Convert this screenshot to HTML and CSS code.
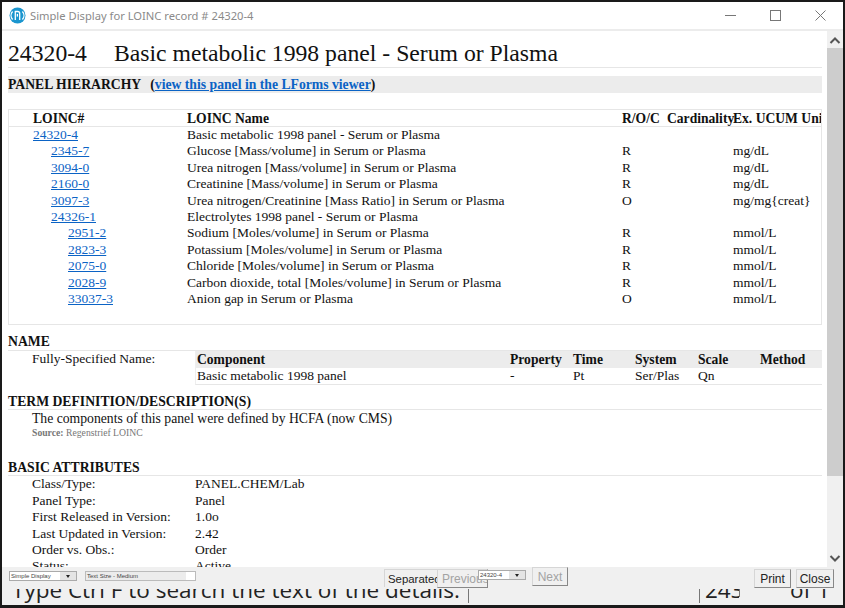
FILE: index.html
```html
<!DOCTYPE html>
<html lang="en">
<head>
    <meta charset="UTF-8">
    <title>Simple Display for LOINC record # 24320-4</title>
    <link rel="stylesheet" href="styles.css">
</head>
<body>
<div class="win">
    <div class="titlebar">
        <svg class="logo" width="17" height="17" viewBox="0 0 17 17">
            <circle cx="8.5" cy="8.5" r="8" fill="#1b96cf"/>
            <path d="M3.600 12.500a6 6 0 0 1 0-8M13.400 4.500a6 6 0 0 1 0 8" fill="none" stroke="#fff" stroke-width="1.300"/>
            <path d="M6.300 13V4.500h2.400a2 2 0 0 1 2 2v6.500" fill="none" stroke="#fff" stroke-width="1.300"/>
            <path d="M8.400 7v2.600" fill="none" stroke="#fff" stroke-width="1.300"/>
        </svg>
        <span class="title-text">Simple Display for LOINC record # 24320-4</span>
        <div class="win-btns">
            <svg width="11" height="11" viewBox="0 0 11 11"><path d="M0 5.500h11" stroke="#777" fill="none"/></svg>
            <svg width="11" height="11" viewBox="0 0 11 11"><rect x=".5" y=".5" width="10" height="10" stroke="#777" fill="none"/></svg>
            <svg width="11" height="11" viewBox="0 0 11 11"><path d="M.5.5l10 10M10.500.5l-10 10" stroke="#777" fill="none"/></svg>
        </div>
    </div>
    <div class="body-row">
        <div class="doc">
            <h1><span class="code">24320-4</span>Basic metabolic 1998 panel - Serum or Plasma</h1>

            <h2 class="bar">PANEL HIERARCHY<span class="paren">(<a href="#">view this panel in the LForms viewer</a>)</span></h2>

            <div class="hier">
                <div class="hrow hhead"><b class="c1">LOINC#</b><b class="c2">LOINC Name</b><b class="c3">R/O/C</b><b class="c4">Cardinality</b><b class="c5">Ex. UCUM Units</b></div>
                <div class="hrow"><span class="c1"><a href="#">24320-4</a></span><span class="c2">Basic metabolic 1998 panel - Serum or Plasma</span></div>
                <div class="hrow"><span class="c1 l1"><a href="#">2345-7</a></span><span class="c2">Glucose [Mass/volume] in Serum or Plasma</span><span class="c3">R</span><span class="c4"></span><span class="c5">mg/dL</span></div>
                <div class="hrow"><span class="c1 l1"><a href="#">3094-0</a></span><span class="c2">Urea nitrogen [Mass/volume] in Serum or Plasma</span><span class="c3">R</span><span class="c4"></span><span class="c5">mg/dL</span></div>
                <div class="hrow"><span class="c1 l1"><a href="#">2160-0</a></span><span class="c2">Creatinine [Mass/volume] in Serum or Plasma</span><span class="c3">R</span><span class="c4"></span><span class="c5">mg/dL</span></div>
                <div class="hrow"><span class="c1 l1"><a href="#">3097-3</a></span><span class="c2">Urea nitrogen/Creatinine [Mass Ratio] in Serum or Plasma</span><span class="c3">O</span><span class="c4"></span><span class="c5">mg/mg{creat}</span></div>
                <div class="hrow"><span class="c1 l1"><a href="#">24326-1</a></span><span class="c2">Electrolytes 1998 panel - Serum or Plasma</span></div>
                <div class="hrow"><span class="c1 l2"><a href="#">2951-2</a></span><span class="c2">Sodium [Moles/volume] in Serum or Plasma</span><span class="c3">R</span><span class="c4"></span><span class="c5">mmol/L</span></div>
                <div class="hrow"><span class="c1 l2"><a href="#">2823-3</a></span><span class="c2">Potassium [Moles/volume] in Serum or Plasma</span><span class="c3">R</span><span class="c4"></span><span class="c5">mmol/L</span></div>
                <div class="hrow"><span class="c1 l2"><a href="#">2075-0</a></span><span class="c2">Chloride [Moles/volume] in Serum or Plasma</span><span class="c3">R</span><span class="c4"></span><span class="c5">mmol/L</span></div>
                <div class="hrow"><span class="c1 l2"><a href="#">2028-9</a></span><span class="c2">Carbon dioxide, total [Moles/volume] in Serum or Plasma</span><span class="c3">R</span><span class="c4"></span><span class="c5">mmol/L</span></div>
                <div class="hrow"><span class="c1 l2"><a href="#">33037-3</a></span><span class="c2">Anion gap in Serum or Plasma</span><span class="c3">O</span><span class="c4"></span><span class="c5">mmol/L</span></div>
            </div>

            <h2 class="sec name-sec">NAME</h2>
            <div class="name-row">
                <div class="attr-label">Fully-Specified Name:</div>
                <div class="parts">
                    <div class="prow phead"><b class="p1">Component</b><b class="p2">Property</b><b class="p3">Time</b><b class="p4">System</b><b class="p5">Scale</b><b class="p6">Method</b></div>
                    <div class="prow"><span class="p1">Basic metabolic 1998 panel</span><span class="p2">-</span><span class="p3">Pt</span><span class="p4">Ser/Plas</span><span class="p5">Qn</span><span class="p6"></span></div>
                </div>
            </div>

            <h2 class="sec term-sec">TERM DEFINITION/DESCRIPTION(S)</h2>
            <p class="term">The components of this panel were defined by HCFA (now CMS)</p>
            <p class="source"><b>Source:</b> Regenstrief LOINC</p>

            <h2 class="sec basic-sec">BASIC ATTRIBUTES</h2>
            <div class="attr"><div class="attr-label">Class/Type:</div><div>PANEL.CHEM/Lab</div></div>
            <div class="attr"><div class="attr-label">Panel Type:</div><div>Panel</div></div>
            <div class="attr"><div class="attr-label">First Released in Version:</div><div>1.0o</div></div>
            <div class="attr"><div class="attr-label">Last Updated in Version:</div><div>2.42</div></div>
            <div class="attr"><div class="attr-label">Order vs. Obs.:</div><div>Order</div></div>
            <div class="attr"><div class="attr-label">Status:</div><div>Active</div></div>
        </div>
        <div class="scrollbar">
            <svg width="16" height="17" viewBox="0 0 16 17"><path d="M3.500 12l4.500-4.500 4.500 4.500" fill="none" stroke="#555" stroke-width="2"/></svg>
            <div class="thumb"></div>
            <svg class="arrow-down" width="16" height="17" viewBox="0 0 16 17"><path d="M3.500 6l4.500 4.500 4.500-4.500" fill="none" stroke="#555" stroke-width="2"/></svg>
        </div>
    </div>
    <div class="toolbar">
        <div class="combo combo-display"><span>Simple Display</span><i class="arrow"></i></div>
        <div class="textsize">Text Size - Medium</div>
        <div class="mid-btns">
            <div class="btn sep">Separated</div>
            <div class="btn prev">Previous</div>
            <div class="combo combo-rec"><span>24320-4</span><i class="arrow"></i></div>
            <div class="btn next">Next</div>
        </div>
        <div class="btn print">Print</div>
        <div class="btn close">Close</div>
    </div>
    <div class="under">
        <span class="search-text">Type Ctrl F to search the text of the details.</span>
        <span class="rule r1"></span>
        <span class="rule r2"></span>
        <span class="pageno">243</span>
        <span class="rule r3"></span>
        <span class="pageof">of 1</span>
    </div>
</div>
</body>
</html>
```
FILE: styles.css
```css
html, body {
    margin: 0;
    padding: 0;
    height: 608px;
    overflow: hidden;
    background: #1a1a1a;
}
.win {
    box-sizing: border-box;
    width: 845px;
    height: 608px;
    border: 2px solid #1a1a1a;
    border-bottom-width: 3px;
    display: flex;
    flex-direction: column;
    background: #fff;
    font-family: "Liberation Serif", serif;
    color: #111;
    overflow: hidden;
}
.titlebar {
    flex: none;
    height: 27px;
    display: flex;
    align-items: center;
    padding-left: 7px;
    border-bottom: 2px solid #ececec;
    background: #fff;
}
.logo {
    margin-right: 4px;
}
.title-text {
    font-family: "Noto Sans", sans-serif;
    font-size: 11.2px;
    color: #8a8a8a;
}
.win-btns {
    margin-left: auto;
    display: flex;
    gap: 34px;
    padding-right: 17px;
}
.body-row {
    flex: none;
    height: 536px;
    display: flex;
}
.doc {
    flex: 1;
    min-width: 0;
    height: 536px;
    overflow: hidden;
    padding: 0 5px 0 6px;
    font-size: 13.5px;
    line-height: 16.4px;
}
.scrollbar {
    flex: none;
    width: 16px;
    background: #f0f0f0;
    display: flex;
    flex-direction: column;
}
.thumb {
    flex: none;
    height: 428px;
    background: #cdcdcd;
}
.arrow-down {
    margin-top: auto;
}
a {
    color: #0b63c5;
}
h1 {
    margin: 0;
    padding: 8px 0 0;
    height: 37px;
    box-sizing: border-box;
    font-size: 23.7px;
    line-height: 28px;
    font-weight: normal;
    border-bottom: 1px solid #e6e6e6;
    white-space: nowrap;
}
.code {
    margin-right: 27px;
}
h2 {
    margin: 0;
    font-size: 13.7px;
    line-height: 16px;
}
.bar {
    margin-top: 8px;
    height: 16px;
    padding-top: 1px;
    background: #ececec;
}
.paren {
    margin-left: 9px;
}
.hier {
    margin-top: 16px;
    height: 214px;
    border: 1px solid #e6e6e6;
    overflow: hidden;
}
.hrow {
    display: flex;
    height: 16.4px;
    white-space: nowrap;
}
.hhead {
    height: 15px;
    padding-top: 1px;
    border-bottom: 1px solid #e6e6e6;
    font-size: 13.6px;
}
.c1 {
    flex: none;
    width: 178px;
    padding-left: 24px;
    box-sizing: border-box;
}
.l1 {
    padding-left: 42px;
}
.l2 {
    padding-left: 59px;
}
.c2 {
    flex: none;
    width: 435px;
}
.c3 {
    flex: none;
    width: 45px;
}
.c4 {
    flex: none;
    width: 66px;
}
.c5 {
    flex: none;
}
.sec {
    border-bottom: 1px solid #e6e6e6;
}
.name-sec {
    margin-top: 9px;
}
.name-row {
    display: flex;
}
.attr-label {
    flex: none;
    width: 187px;
    padding-left: 24px;
    box-sizing: border-box;
}
.parts {
    flex: 1;
    min-width: 0;
    border-left: 1px solid #eee;
    border-bottom: 1px solid #e6e6e6;
}
.prow {
    display: flex;
    height: 16px;
}
.phead {
    background: #ececec;
    padding-top: 1px;
    font-size: 13.6px;
}
.p1 {
    flex: none;
    width: 313px;
    padding-left: 1px;
}
.p2 {
    flex: none;
    width: 63px;
}
.p3 {
    flex: none;
    width: 62px;
}
.p4 {
    flex: none;
    width: 63px;
}
.p5 {
    flex: none;
    width: 62px;
}
.p6 {
    flex: none;
}
.term-sec {
    margin-top: 9px;
    line-height: 15px;
}
.term {
    margin: 1px 0 0 24px;
    font-size: 13.7px;
}
.source {
    margin: -1px 0 0 24px;
    font-size: 9.7px;
    line-height: 13px;
    color: #777;
}
.basic-sec {
    margin-top: 21px;
    line-height: 15px;
}
.attr {
    display: flex;
}
.toolbar {
    flex: none;
    height: 22px;
    background: #f0f0f0;
    display: flex;
    align-items: flex-start;
    position: relative;
    z-index: 1;
    font-family: "Liberation Sans", sans-serif;
    padding-left: 7px;
}
.combo {
    box-sizing: border-box;
    display: flex;
    align-items: center;
    height: 10px;
    font-size: 6px;
    background: #fff;
    border: 1px solid #aaa;
    color: #444;
    line-height: 8px;
}
.combo span {
    flex: 1;
    padding-left: 1px;
    overflow: hidden;
    white-space: nowrap;
}
.arrow {
    flex: none;
    width: 16px;
    height: 8px;
    background: #e4e4e4;
    position: relative;
}
.arrow::after {
    content: "";
    position: absolute;
    left: 6px;
    top: 3px;
    border: 2px solid transparent;
    border-top: 3px solid #222;
    border-bottom: 0;
}
.combo-display {
    width: 68px;
    margin-top: 4px;
}
.textsize {
    box-sizing: border-box;
    width: 111px;
    height: 10px;
    margin: 4px 0 0 8px;
    border: 1px solid #bbb;
    background: linear-gradient(to right, #ececec 92%, #fff 92%);
    font-size: 6px;
    line-height: 8px;
    color: #444;
    padding-left: 1px;
}
.btn {
    box-sizing: border-box;
    font-family: "Liberation Sans", sans-serif;
    font-size: 12px;
    height: 19px;
    line-height: 18px;
    text-align: center;
    background: #f0f0f0;
    color: #222;
    border: 1px solid #d6d6d6;
    border-right-color: #888;
    border-bottom-color: #888;
}
.mid-btns {
    position: relative;
    margin-left: 188px;
    display: flex;
    width: 184px;
    padding-top: 2px;
}
.sep {
    width: 53px;
    height: 18px;
    border-right: 0;
    border-bottom: 0;
    overflow: hidden;
    white-space: nowrap;
    text-align: left;
    padding-left: 3px;
    font-size: 11.4px;
}
.prev {
    width: 51px;
    color: #a3a3a3;
    text-align: left;
    padding-left: 4px;
    white-space: nowrap;
    overflow: hidden;
}
.combo-rec {
    position: absolute;
    left: 94px;
    top: 3px;
    width: 48px;
}
.next {
    width: 36px;
    margin: -2px 0 0 44px;
    color: #a3a3a3;
}
.print {
    width: 37px;
    margin: 2px 0 0 auto;
}
.close {
    width: 38px;
    margin: 2px 9px 0 5px;
}
.under {
    flex: none;
    height: 16px;
    background: #f0f0f0;
    position: relative;
    overflow: hidden;
    font-family: "Open Sans", sans-serif;
    font-size: 22.5px;
    line-height: 18px;
    color: #222;
    white-space: nowrap;
}
.search-text {
    position: absolute;
    left: 10px;
    top: -8px;
}
.rule {
    position: absolute;
    top: 0;
    width: 1px;
    height: 14px;
    background: #777;
}
.r1 {
    left: 466px;
}
.r2 {
    left: 697px;
}
.r3 {
    left: 737px;
    height: 8px;
}
.pageno {
    position: absolute;
    left: 703px;
    top: -8px;
    width: 34px;
    overflow: hidden;
}
.pageof {
    position: absolute;
    left: 788px;
    top: -8px;
}
```
